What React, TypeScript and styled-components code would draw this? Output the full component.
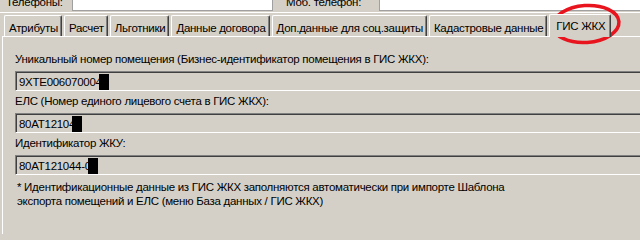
import styled, { createGlobalStyle } from 'styled-components';

const GlobalStyle = createGlobalStyle`
  html, body {
    margin: 0;
    padding: 0;
    background: #d4d0c8;
  }
  body {
    font-family: 'Liberation Sans', Arial, sans-serif;
    font-size: 11.5px;
    letter-spacing: -0.28px;
    color: #000;
  }
`;

const Screen = styled.div`
  position: relative;
  width: 640px;
  height: 234px;
  overflow: hidden;
  background: #d4d0c8;
`;

const TopRow = styled.div`
  display: flex;
  align-items: center;
  height: 20px;
  margin-top: -8px;
  padding-left: 6px;
  border-bottom: 1px solid #ffffff;
`;

const TopLabel = styled.span<{ $width: number; $gap?: number }>`
  width: ${(p) => p.$width}px;
  margin-left: ${(p) => p.$gap ?? 0}px;
  flex: none;
  line-height: 14px;
`;

const WhiteBox = styled.div<{ $width?: number }>`
  height: 18px;
  box-sizing: border-box;
  background: #ffffff;
  border: 1px solid #a0a0a0;
  ${(p) => (p.$width ? `width: ${p.$width}px; flex: none;` : 'flex: 1; margin-right: -4px;')}
`;

const TabStrip = styled.div`
  display: flex;
  align-items: flex-end;
  gap: 2px;
  height: 22px;
  margin-top: 1px;
  padding-left: 4px;
  position: relative;
  z-index: 1;
`;

const Tab = styled.div<{ $active?: boolean }>`
  box-sizing: border-box;
  height: ${(p) => (p.$active ? 23 : 21)}px;
  margin-bottom: ${(p) => (p.$active ? -1 : 0)}px;
  padding: ${(p) => (p.$active ? '4px 5px 0 6px' : '5px 3px 0 4px')};
  background: #d4d0c8;
  border-top: 1px solid #ffffff;
  border-left: 1px solid #ffffff;
  border-right: 1px solid #404040;
  box-shadow: inset -1px 0 0 #808080;
  border-radius: 2px 2px 0 0;
  white-space: nowrap;
  line-height: 14px;
`;

const Panel = styled.div`
  margin-left: 2px;
  width: 660px;
  height: 220px;
  box-sizing: border-box;
  border-top: 1px solid #ffffff;
  border-left: 1px solid #ffffff;
  padding: 15px 0 0 12px;
  display: flex;
  flex-direction: column;
`;

const FieldLabel = styled.div`
  line-height: 14px;
  height: 14px;
  white-space: nowrap;
`;

const Sunken = styled.div`
  margin: 5px 0 3px;
  height: 20px;
  box-sizing: border-box;
  border-top: 1px solid #808080;
  border-left: 1px solid #808080;
  border-bottom: 1px solid #ffffff;
  box-shadow: inset 1px 1px 0 #404040;
  padding: 2px 0 0 3px;
  display: flex;
  align-items: center;
  line-height: 14px;
  white-space: nowrap;
`;

const Redacted = styled.span`
  display: inline-block;
  width: 10px;
  height: 16px;
  margin-left: -3px;
  margin-top: -1px;
  background: #000;
`;

const Note = styled.div`
  margin-top: 2px;
  padding-left: 2px;
  line-height: 14px;
`;

const Circle = styled.svg`
  position: absolute;
  left: 548px;
  top: 1px;
  pointer-events: none;
`;

const fields = [
  {
    label: 'Уникальный номер помещения (Бизнес-идентификатор помещения в ГИС ЖКХ):',
    value: '9XTE006070004',
  },
  { label: 'ЕЛС (Номер единого лицевого счета в ГИС ЖКХ):', value: '80AT12104' },
  { label: 'Идентификатор ЖКУ:', value: '80AT121044-0' },
];

const tabs = [
  'Атрибуты',
  'Расчет',
  'Льготники',
  'Данные договора',
  'Доп.данные для соц.защиты',
  'Кадастровые данные',
  'ГИС ЖКХ',
];

export default function App() {
  return (
    <Screen>
      <GlobalStyle />
      <TopRow>
        <TopLabel $width={66}>Телефоны:</TopLabel>
        <WhiteBox $width={201} />
        <TopLabel $width={93} $gap={13}>
          Моб. телефон:
        </TopLabel>
        <WhiteBox />
      </TopRow>
      <TabStrip>
        {tabs.map((t) => (
          <Tab key={t} $active={t === 'ГИС ЖКХ'}>
            {t}
          </Tab>
        ))}
      </TabStrip>
      <Panel>
        {fields.map((f) => (
          <div key={f.label}>
            <FieldLabel>{f.label}</FieldLabel>
            <Sunken>
              {f.value}
              <Redacted />
            </Sunken>
          </div>
        ))}
        <Note>
          * Идентификационные данные из ГИС ЖКХ заполняются автоматически при импорте Шаблона
          <br />
          экспорта помещений и ЕЛС (меню База данных / ГИС ЖКХ)
        </Note>
      </Panel>
      <Circle width="76" height="46" viewBox="0 0 76 46">
        <ellipse
          cx="38"
          cy="23"
          rx="33"
          ry="18.5"
          fill="none"
          stroke="#e8151f"
          strokeWidth="3.5"
          transform="rotate(-4 38 23)"
        />
      </Circle>
    </Screen>
  );
}
